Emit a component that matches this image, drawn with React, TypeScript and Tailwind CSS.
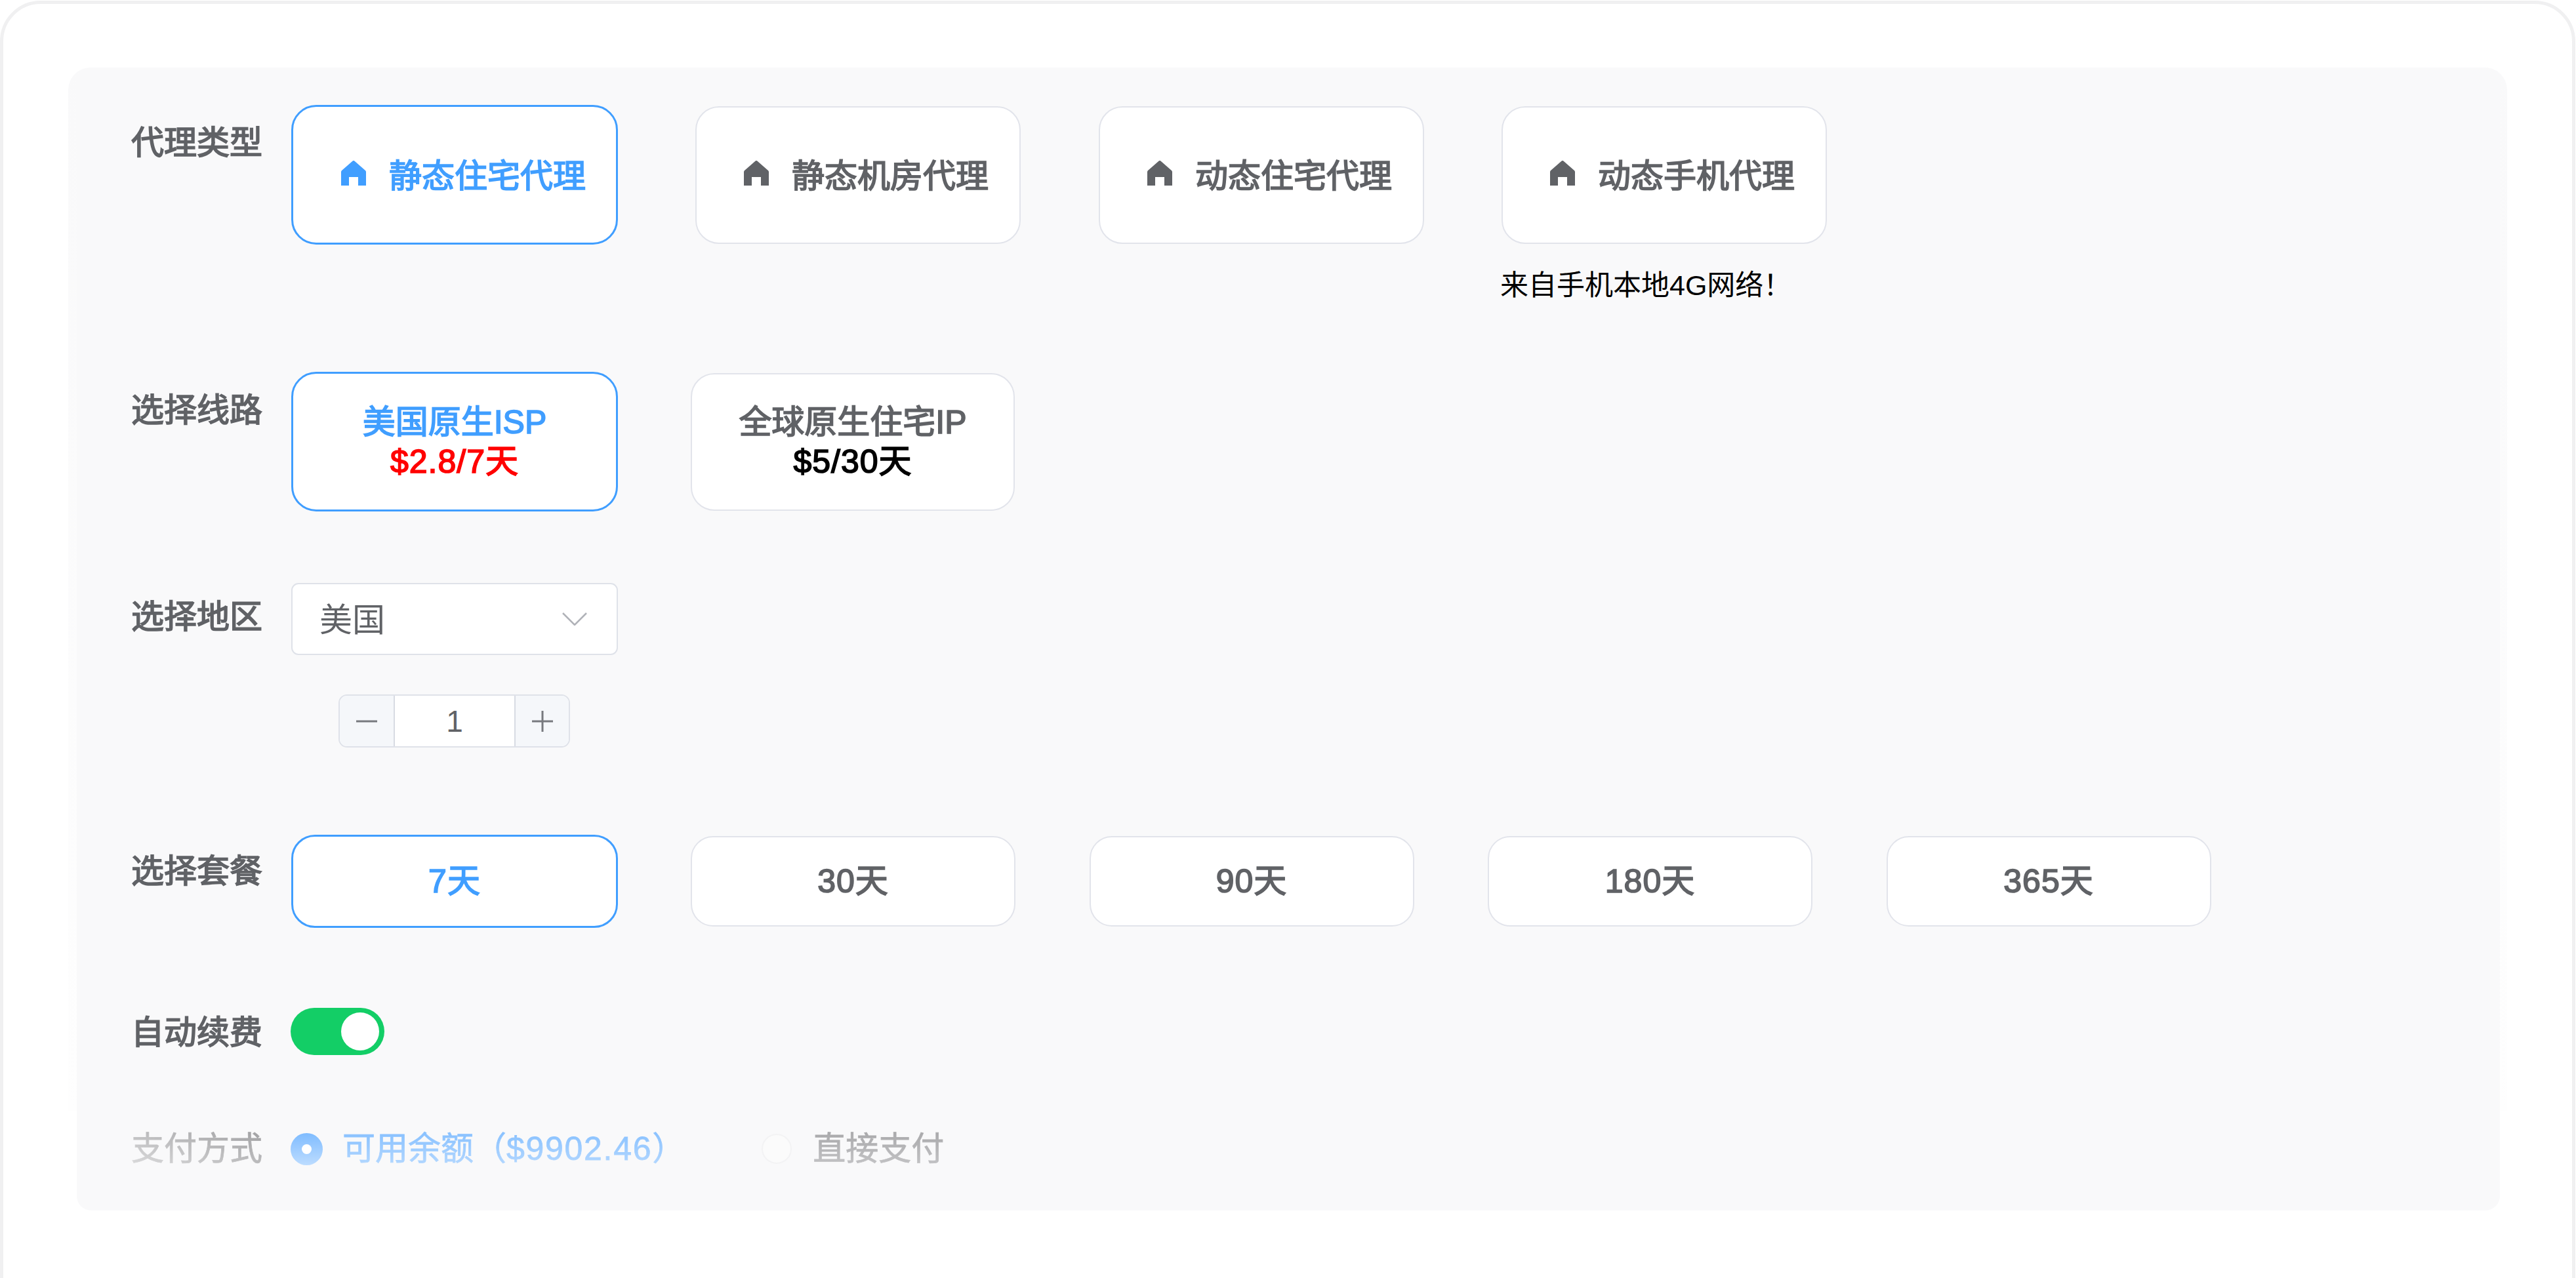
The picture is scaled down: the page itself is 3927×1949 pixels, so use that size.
const FONT = "font-['Liberation_Sans','Noto_Sans_CJK_SC',sans-serif]";
const MED = "[-webkit-text-stroke:1.7px_currentColor]";

function HomeIcon({ className }: { className: string }) {
  return (
    <svg viewBox="0 0 38 38" className={`w-[38px] h-[38px] shrink-0 ${className}`} fill="currentColor">
      <path d="M17.6 0.6 a2 2 0 0 1 2.8 0 L37 15 a3 3 0 0 1 1 2 V38 H26 V25 H12 V38 H0 V17 a3 3 0 0 1 1-2 Z" />
    </svg>
  );
}

function TypeButton({ label, active, className = "" }: { label: string; active?: boolean; className?: string }) {
  return (
    <div
      className={
        active
          ? `w-[498px] h-[213px] -mr-[1px] bg-white border-[3px] border-[#409eff] rounded-[38px] flex items-center pl-[73px] gap-[35px] text-[#409eff] ${className}`
          : `w-[496px] h-[210px] mt-[2px] bg-white border-[2.5px] border-[#e2e4eb] rounded-[36px] flex items-center pl-[72px] gap-[35px] text-[#606266] ${className}`
      }
    >
      <HomeIcon className="-mt-[6px]" />
      <span className={`text-[50px] leading-[72px] mt-[4px] whitespace-nowrap ${MED}`}>{label}</span>
    </div>
  );
}

function PlanButton({ label, active }: { label: string; active?: boolean }) {
  return (
    <div
      className={
        active
          ? `w-[498px] h-[142px] bg-white border-[3px] border-[#409eff] rounded-[36px] flex items-center justify-center text-[50px] tracking-[1px] text-[#409eff] ${MED}`
          : `w-[495px] h-[138px] bg-white border-[2.5px] border-[#e2e4eb] rounded-[34px] flex items-center justify-center text-[50px] tracking-[1px] text-[#606266] ${MED}`
      }
    >
      {label}
    </div>
  );
}

function Label({ children, className = "" }: { children: string; className?: string }) {
  return (
    <div className={`w-[244px] shrink-0 text-[50px] leading-[72px] text-[#606266] ${MED} ${className}`}>
      {children}
    </div>
  );
}

export default function App() {
  return (
    <div className={`h-[1949px] w-[3927px] overflow-hidden bg-white ${FONT}`}>
      <div className="mt-[1px] w-[3926px] h-[2200px] border-[5px] border-[#f0f0f1] rounded-[62px] bg-white pt-[97px] pl-[112px]">
        <div className="relative w-[3694px] h-[1743px]">
          <div className="absolute left-[-13px] right-[-11px] top-0 h-[1592px] rounded-t-[34px] bg-gradient-to-b from-[#f9f9fa] to-[#fefefe]" />
          <div className="relative h-full bg-[#f9f9fa] rounded-[22px] pt-[57px] pl-[83px] flex flex-col">
            <div className="flex items-start">
              <Label className="pt-[22px]">代理类型</Label>
              <div className="flex items-start gap-[119px]">
                <TypeButton label="静态住宅代理" active />
                <TypeButton label="静态机房代理" />
                <TypeButton label="动态住宅代理" />
                <div className="flex flex-col -ml-[1px]">
                  <TypeButton label="动态手机代理" />
                  <div className="mt-[33px] -ml-[2px] text-[43px] leading-[60px] text-black whitespace-nowrap">来自手机本地4G网络！</div>
                </div>
              </div>
            </div>

            <div className="flex items-start mt-[102px]">
              <Label className="pt-[23px]">选择线路</Label>
              <div className={`w-[498px] h-[213px] bg-white border-[3px] border-[#409eff] rounded-[38px] flex flex-col items-center justify-center text-[50px] leading-[60px] ${MED}`}>
                <span className="text-[#409eff]">美国原生ISP</span>
                <span className="text-[#ff0000] tracking-[1px]">$2.8/7天</span>
              </div>
              <div className={`ml-[111px] mt-[2px] w-[494px] h-[210px] bg-white border-[2.5px] border-[#e2e4eb] rounded-[36px] flex flex-col items-center justify-center text-[50px] leading-[60px] ${MED}`}>
                <span className="text-[#606266]">全球原生住宅IP</span>
                <span className="text-black tracking-[1px]">$5/30天</span>
              </div>
            </div>

            <div className="flex items-start mt-[109px]">
              <Label className="pt-[16px]">选择地区</Label>
              <div className="w-[498px] flex flex-col items-start">
                <div className="w-full h-[110px] bg-white border-[2.5px] border-[#dfe2e9] rounded-[11px] flex items-center justify-between pl-[41px] pr-[45px]">
                  <span className="text-[50px] leading-[72px] mt-[3px] text-[#606266]">美国</span>
                  <svg viewBox="0 0 38 20" className="w-[38px] h-[20px]" fill="none" stroke="#b0b2b8" strokeWidth="2.5">
                    <path d="M1 1 L19 19 L37 1" />
                  </svg>
                </div>
                <div className="mt-[60px] ml-[72px] w-[353px] h-[81px] bg-white border-[2.5px] border-[#dfe2e9] rounded-[13px] flex overflow-hidden">
                  <div className="w-[84px] bg-[#f5f7fa] border-r-[2.5px] border-[#d8dbe3] flex items-center justify-center">
                    <svg viewBox="0 0 32 4" className="w-[32px] h-[4px]" fill="none" stroke="#77797e" strokeWidth="3">
                      <path d="M0 2 H32" />
                    </svg>
                  </div>
                  <div className="flex-1 flex items-center justify-center text-[46px] leading-none text-[#606266]">1</div>
                  <div className="w-[83px] bg-[#f5f7fa] border-l-[2.5px] border-[#d8dbe3] flex items-center justify-center">
                    <svg viewBox="0 0 32 32" className="w-[32px] h-[32px]" fill="none" stroke="#77797e" strokeWidth="3">
                      <path d="M0 16 H32 M16 0 V32" />
                    </svg>
                  </div>
                </div>
              </div>
            </div>

            <div className="flex items-center mt-[133px]">
              <Label className="-mt-[30px]">选择套餐</Label>
              <PlanButton label="7天" active />
              <div className="flex ml-[111px] gap-[112.5px]">
                <PlanButton label="30天" />
                <PlanButton label="90天" />
                <PlanButton label="180天" />
                <PlanButton label="365天" />
              </div>
            </div>

            <div className="flex items-center mt-[122px] h-[72px]">
              <Label className="-mr-[1px] mt-[3px]">自动续费</Label>
              <div className="w-[143px] h-[72px] rounded-full bg-[#13ce66] flex items-center justify-end pr-[8px]">
                <div className="w-[58px] h-[58px] rounded-full bg-white" />
              </div>
            </div>

            <div className="flex items-center mt-[107px] text-[50px] leading-[72px] [-webkit-text-stroke:0.8px_currentColor]">
              <div className="w-[243px] shrink-0">
                <span className="bg-gradient-to-tr from-[#dcdcdd] to-[#a0a0a2] bg-clip-text text-transparent">支付方式</span>
              </div>
              <div className="w-[49px] h-[49px] rounded-full bg-gradient-to-b from-[#7fbcff] to-[#bcdcff] flex items-center justify-center">
                <div className="w-[15px] h-[15px] rounded-full bg-white" />
              </div>
              <span className="ml-[30px] bg-gradient-to-b from-[#7fbcff] to-[#bcdcff] bg-clip-text text-transparent whitespace-nowrap">可用余额（<span className="tracking-[1.7px]">$9902.46</span>）</span>
              <div className="ml-[117px] w-[46px] h-[46px] rounded-full bg-[#fbfbfb] border-[2px] border-[#f3f3f4]" />
              <span className="ml-[32px] bg-gradient-to-b from-[#a4a4a6] to-[#c8c8ca] bg-clip-text text-transparent whitespace-nowrap">直接支付</span>
            </div>
          </div>
        </div>
      </div>
    </div>
  );
}
